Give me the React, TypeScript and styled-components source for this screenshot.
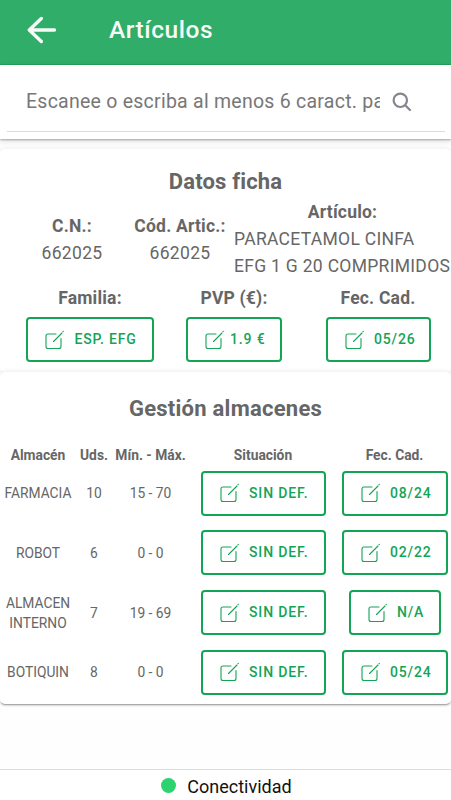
import React from "react";
import styled, { createGlobalStyle } from "styled-components";

const GlobalStyle = createGlobalStyle`
  * { box-sizing: border-box; }
  body {
    margin: 0;
    background: #fff;
    font-family: Roboto, "Liberation Sans", sans-serif;
    color: #666;
    overflow: hidden;
  }
`;

const Screen = styled.div`
  display: flex;
  flex-direction: column;
  width: 451px;
  height: 800px;
  background: #fefefe;
  overflow: hidden;
`;

const Header = styled.header`
  display: flex;
  align-items: center;
  flex: none;
  height: 65px;
  padding: 0 0 5px 27px;
  background: #30ad69;
  border-bottom: 1px solid #27a35f;
  color: #f6fbf8;
`;

const BackButton = styled.button`
  display: flex;
  width: 82px;
  padding: 0;
  border: 0;
  background: none;
  color: inherit;
`;

const PageTitle = styled.h1`
  margin: 0;
  font-size: 24.5px;
  font-weight: 500;
  line-height: 32px;
  letter-spacing: 0.55px;
`;

const SearchBar = styled.div`
  position: relative;
  flex: none;
  height: 74px;
  padding: 0 6px 0 7px;
  background: #fff;
  box-shadow: 0 1px 2px rgba(0, 0, 0, 0.3), 0 2px 7px rgba(0, 0, 0, 0.12);
`;

const SearchField = styled.div`
  display: flex;
  align-items: center;
  height: 67px;
  padding: 6px 0 0 19px;
  border-bottom: 1px solid #dcdcdc;
`;

const Placeholder = styled.span`
  width: 354px;
  padding-top: 2px;
  overflow: hidden;
  white-space: nowrap;
  font-size: 19.5px;
  line-height: 28px;
  letter-spacing: 0.25px;
  color: #777;
`;

const SearchIcon = styled.svg`
  flex: none;
  margin: 1px 0 0 12px;
`;

const Content = styled.main`
  flex: 1;
  padding-top: 10px;
`;

const Card = styled.section<{ $height: number; $last?: boolean }>`
  height: ${(p) => p.$height}px;
  background: #fff;
  border-radius: 5px;
  box-shadow: ${(p) =>
    p.$last
      ? "0 2px 2px -1px rgba(0,0,0,.4), 0 0 5px rgba(0,0,0,.1)"
      : "0 0 5px rgba(0,0,0,.08)"};
`;

const CardTitle = styled.h2<{ $top: number; $spacing: number }>`
  margin: 0;
  padding-top: ${(p) => p.$top}px;
  text-align: center;
  font-size: 22px;
  font-weight: 700;
  line-height: 30px;
  letter-spacing: ${(p) => p.$spacing}px;
`;

const Details = styled.div`
  display: grid;
  grid-template-columns: 108px 108px 217px;
  align-items: center;
  height: 81px;
  margin-top: 2px;
  padding: 0 0 0 18px;
`;

const Detail = styled.div`
  text-align: center;
  white-space: nowrap;
`;

const Label = styled.div`
  font-size: 17.5px;
  font-weight: 700;
  line-height: 27px;
  letter-spacing: 0.2px;
`;

const Value = styled.div<{ $left?: boolean }>`
  font-size: 17.5px;
  line-height: 27px;
  letter-spacing: 0.3px;
  text-align: ${(p) => (p.$left ? "left" : "center")};
  white-space: nowrap;
`;

const Actions = styled.div`
  display: grid;
  grid-template-columns: repeat(3, 144px);
  justify-items: center;
  padding: 5px 0 0 18px;
`;

const Action = styled.div`
  display: flex;
  flex-direction: column;
  align-items: center;
  gap: 5px;
`;

const OutlineButton = styled.button<{ $width: number; $tight?: boolean }>`
  display: flex;
  align-items: center;
  width: ${(p) => p.$width}px;
  height: 45px;
  padding: 0 0 0 17px;
  gap: ${(p) => (p.$tight ? 6 : 10.5)}px;
  border: 2px solid #14a456;
  border-radius: 4px;
  background: #fff;
  color: #14a456;
  font-family: inherit;
  font-size: 14px;
  font-weight: 500;
  letter-spacing: 0.85px;
  white-space: nowrap;
`;

const ButtonText = styled.span`
  padding-bottom: 1px;
`;

const Stock = styled.div`
  display: grid;
  grid-template-columns: 76px 36px 77px 148px 115px;
  grid-template-rows: 35.5px repeat(4, 59.8px);
  padding-top: 11px;
`;

const HeadCell = styled.div`
  padding-top: 10px;
  text-align: center;
  white-space: nowrap;
  font-size: 13.8px;
  font-weight: 700;
  line-height: 20px;
`;

const Cell = styled.div`
  display: flex;
  align-items: center;
  justify-content: center;
  height: 45px;
  text-align: center;
  font-size: 13.8px;
  line-height: 20px;
`;

const Footer = styled.footer`
  display: flex;
  flex: none;
  align-items: center;
  justify-content: center;
  gap: 11px;
  height: 31px;
  padding: 3px 0 0 2px;
  border-top: 1px solid #ddd;
  background: #fff;
  color: #111;
  font-size: 18px;
  letter-spacing: 0;
`;

const StatusDot = styled.span`
  width: 15px;
  height: 15px;
  margin-top: -3px;
  border-radius: 50%;
  background: #2dd36f;
`;

const EditIcon = () => (
  <svg width="19" height="20" viewBox="0 0 19 20" fill="none" stroke="currentColor" strokeWidth="1.1" strokeLinecap="round">
    <path d="M11 4H3Q1 4 1 6v10.500q0 2 2 2h11q2 0 2-2V8.500" />
    <path d="M8.500 11.500 17 3M18 1.700l.4-.4" />
  </svg>
);

const EditButton = ({ width, tight, children }: { width: number; tight?: boolean; children: React.ReactNode }) => (
  <OutlineButton $width={width} $tight={tight}>
    <EditIcon />
    <ButtonText>{children}</ButtonText>
  </OutlineButton>
);

const warehouses = [
  { name: "FARMACIA", units: "10", range: "15 - 70", place: "SIN DEF.", expiry: "08/24", width: 106 },
  { name: "ROBOT", units: "6", range: "0 - 0", place: "SIN DEF.", expiry: "02/22", width: 106 },
  { name: "ALMACEN INTERNO", units: "7", range: "19 - 69", place: "SIN DEF.", expiry: "N/A", width: 92 },
  { name: "BOTIQUIN", units: "8", range: "0 - 0", place: "SIN DEF.", expiry: "05/24", width: 106 },
];

export default function App() {
  return (
    <Screen>
      <GlobalStyle />
      <Header>
        <BackButton aria-label="Volver">
          <svg width="30" height="28" viewBox="0 0 30 28" fill="none" stroke="currentColor" strokeWidth="3.4" strokeLinecap="round" strokeLinejoin="round">
            <path d="M14.300 2.500 2.300 14l12 11.500M3 14h24.500" />
          </svg>
        </BackButton>
        <PageTitle>Artículos</PageTitle>
      </Header>
      <SearchBar>
        <SearchField>
          <Placeholder>Escanee o escriba al menos 6 caract. para buscar</Placeholder>
          <SearchIcon width="20" height="20" viewBox="0 0 20 20" fill="none" stroke="#85868f" strokeWidth="2.2" strokeLinecap="round">
            <circle cx="8.300" cy="8.300" r="6.700" />
            <path d="m13.200 13.200 4.800 4.800" />
          </SearchIcon>
        </SearchField>
      </SearchBar>
      <Content>
        <Card $height={223}>
          <CardTitle $top={18} $spacing={0.15}>Datos ficha</CardTitle>
          <Details>
            <Detail>
              <Label>C.N.:</Label>
              <Value>662025</Value>
            </Detail>
            <Detail>
              <Label>Cód. Artic.:</Label>
              <Value>662025</Value>
            </Detail>
            <Detail>
              <Label>Artículo:</Label>
              <Value $left>PARACETAMOL CINFA<br />EFG 1 G 20 COMPRIMIDOS</Value>
            </Detail>
          </Details>
          <Actions>
            <Action>
              <Label>Familia:</Label>
              <EditButton width={128}>ESP. EFG</EditButton>
            </Action>
            <Action>
              <Label>PVP (€):</Label>
              <EditButton width={96} tight>1.9 €</EditButton>
            </Action>
            <Action>
              <Label>Fec. Cad.</Label>
              <EditButton width={105}>05/26</EditButton>
            </Action>
          </Actions>
        </Card>
        <Card $height={332} $last>
          <CardTitle $top={22} $spacing={0.25}>Gestión almacenes</CardTitle>
          <Stock>
            {["Almacén", "Uds.", "Mín. - Máx.", "Situación", "Fec. Cad."].map((t) => (
              <HeadCell key={t}>{t}</HeadCell>
            ))}
            {warehouses.map((w) => (
              <React.Fragment key={w.name}>
                <Cell>{w.name}</Cell>
                <Cell>{w.units}</Cell>
                <Cell>{w.range}</Cell>
                <Cell><EditButton width={125}>{w.place}</EditButton></Cell>
                <Cell><EditButton width={w.width}>{w.expiry}</EditButton></Cell>
              </React.Fragment>
            ))}
          </Stock>
        </Card>
      </Content>
      <Footer>
        <StatusDot />
        <span>Conectividad</span>
      </Footer>
    </Screen>
  );
}
